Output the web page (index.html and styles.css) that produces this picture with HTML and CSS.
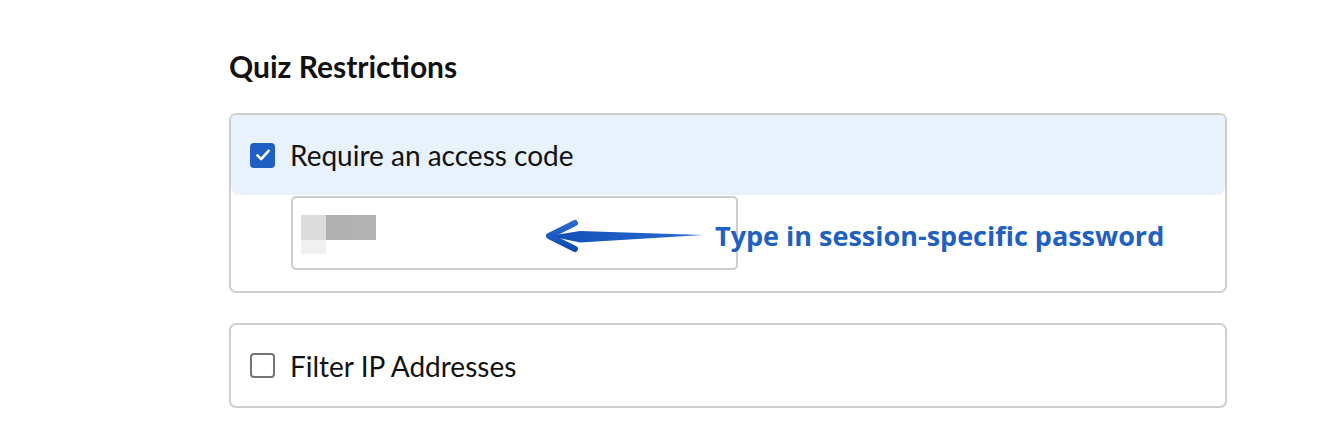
FILE: index.html
```html
<!DOCTYPE html>
<html lang="en">
<head>
<meta charset="utf-8">
<title>Quiz Restrictions</title>
<link rel="stylesheet" href="styles.css">
</head>
<body>
<main class="page">
  <h2 class="title">Quiz Restrictions</h2>

  <section class="panel">
    <label class="option option-active">
      <span class="box checked">
        <svg viewBox="0 0 24 24" width="18" height="18"><path d="M4.5 12.5 L9.5 17.5 L19.5 6.5" fill="none" stroke="#fff" stroke-width="3.6" stroke-linecap="round" stroke-linejoin="round"/></svg>
      </span>
      <span class="label">Require an access code</span>
    </label>
    <div class="code-row">
      <div class="code-input">
        <div class="blur">
          <span class="px p1"></span><span class="px p2"></span><span class="px p3"></span>
          <span class="px p4"></span>
        </div>
      </div>
      <div class="annotation">
        <svg class="arrow" viewBox="0 0 160 36" width="160" height="36">
          <defs>
            <linearGradient id="ag" x1="0" y1="0" x2="1" y2="0">
              <stop offset="0" stop-color="#114fb5"/>
              <stop offset="1" stop-color="#2b6bd2"/>
            </linearGradient>
            <linearGradient id="av" x1="0" y1="0" x2="0" y2="1">
              <stop offset="0" stop-color="#2a69cf"/>
              <stop offset="1" stop-color="#0f4cb0"/>
            </linearGradient>
          </defs>
          <path d="M159 17 L36 13 L5 18 L36 24.5 Z" fill="url(#ag)"/>
          <path d="M31 5 L5 18 L31 31" fill="none" stroke="url(#av)" stroke-width="6" stroke-linecap="round" stroke-linejoin="round"/>
        </svg>
        <span class="note">Type in session-specific password</span>
      </div>
    </div>
  </section>

  <section class="panel panel-plain">
    <label class="option">
      <span class="box"></span>
      <span class="label">Filter IP Addresses</span>
    </label>
  </section>
</main>
</body>
</html>
```

FILE: styles.css
```css
html, body {
  margin: 0;
  padding: 0;
  background: #fff;
}

body {
  font-family: Lato, "Liberation Sans", sans-serif;
  color: #111;
}

.page {
  width: 998px;
  margin-left: 229px;
  padding-top: 44px;
}

.title {
  margin: 0 0 24px;
  font-size: 30px;
  line-height: 44px;
  font-weight: 700;
  height: 45px;
}

.panel {
  border: 2px solid #cfcfcf;
  border-radius: 7px;
  margin-bottom: 30px;
}

.option {
  display: flex;
  align-items: center;
  gap: 15px;
  height: 80px;
  padding-left: 19px;
}

.option-active {
  background: #e8f2fd;
  border-radius: 5px 5px 8px 8px;
}

.panel-plain .option {
  height: 81px;
}

.box {
  width: 25px;
  height: 25px;
  box-sizing: border-box;
  border: 2px solid #757575;
  border-radius: 4px;
  display: flex;
  align-items: center;
  justify-content: center;
  background: #fff;
}

.box.checked {
  background: #1f5ec2;
  border-color: #1f5ec2;
}

.label {
  font-size: 28px;
  line-height: 32px;
  color: #111;
}

.code-row {
  display: flex;
  align-items: center;
  padding: 1px 0 21px 60px;
  position: relative;
}

.code-input {
  width: 447px;
  height: 74px;
  box-sizing: border-box;
  border: 2px solid #cdcdcd;
  border-radius: 5px;
  padding: 17px 0 0 8px;
}

.blur {
  display: grid;
  grid-template-columns: repeat(3, 25px);
  grid-template-rows: 25px 14px;
}

.px { display: block; }
.p1 { background: #dcdcdc; }
.p2 { background: #b0b0b0; }
.p3 { background: #b3b3b3; }
.p4 { background: #f0f0f0; }

.annotation {
  position: absolute;
  left: 313px;
  top: 23px;
  display: flex;
  align-items: center;
  gap: 11px;
}

.note {
  font-family: "Open Sans", "DejaVu Sans", sans-serif;
  font-weight: 700;
  font-size: 27px;
  line-height: 36px;
  color: #1f60c2;
}
```
